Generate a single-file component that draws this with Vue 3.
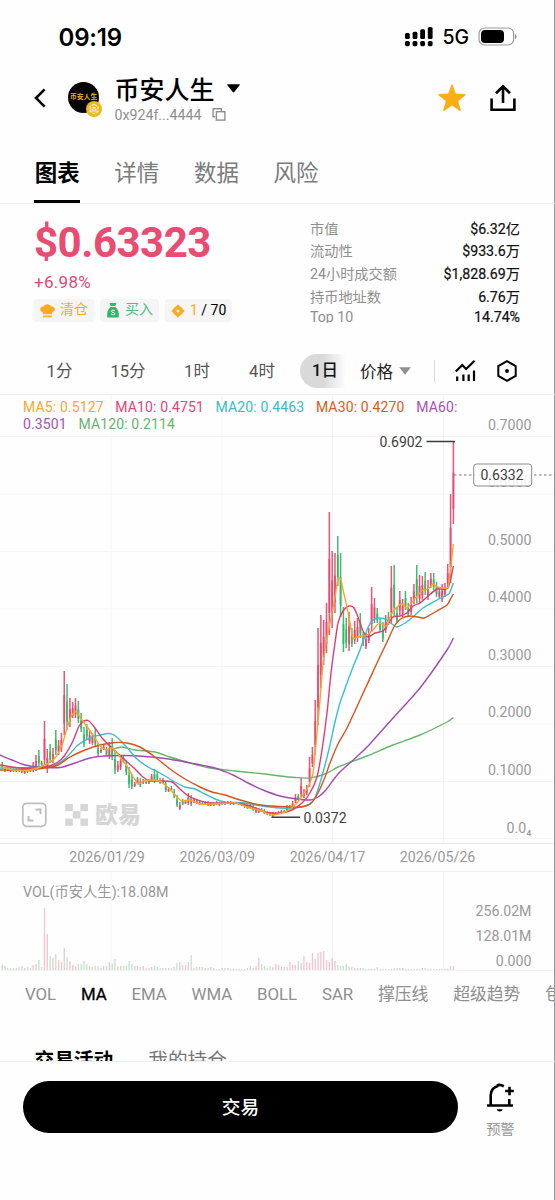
<script setup>
import { computed } from 'vue'

const tabs = ['图表', '详情', '数据', '风险']

const stats = [
  { label: '市值', value: '$6.32亿' },
  { label: '流动性', value: '$933.6万' },
  { label: '24小时成交额', value: '$1,828.69万' },
  { label: '持币地址数', value: '6.76万' },
  { label: 'Top 10', value: '14.74%' },
]

const intervals = ['1分', '15分', '1时', '4时']

const indicators = ['VOL', 'MA', 'EMA', 'WMA', 'BOLL', 'SAR', '撑压线', '超级趋势', '包络线']

const legend = [
  { name: 'MA5', value: '0.5127', color: '#f5a833' },
  { name: 'MA10', value: '0.4751', color: '#e0457b' },
  { name: 'MA20', value: '0.4463', color: '#35bccb' },
  { name: 'MA30', value: '0.4270', color: '#df5a20' },
  { name: 'MA60', value: '0.3501', color: '#a850b8' },
  { name: 'MA120', value: '0.2114', color: '#68b36c' },
]

const gridY = [436.5, 494, 551.5, 609, 666.5, 724, 781.5, 838.5]
const gridX = [111, 222, 332.5, 443.5]
const priceLabels = ['0.7000', '0.6000', '0.5000', '0.4000', '0.3000', '0.2000', '0.1000']
const dates = ['2026/01/29', '2026/03/09', '2026/04/17', '2026/05/26']

// one candle per day: high, low, direction
const raw = `762 769 d,767 772 d,767 771 u,768 772 d,768 772 d,767 772 u,767 772 d,768 773 u,768 774 u,767 773 d,766 772 u,
762 772 u,755 771 u,750 766 d,761 766 d,721 768 u,749 773 u,744 763 d,748 763 u,730 755 d,740 755 u,733 752 u,671 735 u,
684 730 d,698 727 u,702 718 u,698 718 u,701 723 d,713 732 d,727 747 d,724 739 d,730 744 u,733 745 u,728 747 d,743 756 d,
748 753 u,745 750 u,747 756 d,742 759 u,738 760 d,750 774 d,761 772 u,755 770 u,756 763 d,760 775 d,767 788 d,774 789 d,
782 787 u,777 784 u,778 787 d,779 784 u,780 784 d,779 784 u,774 781 u,769 783 d,772 780 d,778 784 d,778 784 u,782 792 d,
787 792 u,786 791 d,789 798 d,795 807 d,802 810 u,799 805 d,800 804 u,793 805 u,795 806 d,798 803 u,799 804 d,800 805 u,
801 805 d,801 804 u,801 806 d,802 806 u,802 806 d,801 805 u,802 806 u,801 805 d,802 805 u,801 804 u,801 805 d,802 805 u,
802 804 d,802 805 u,802 806 u,803 808 d,804 809 d,804 808 u,805 811 d,807 813 u,808 813 u,808 812 d,809 814 d,811 815 d,
812 816 d,812 817 u,812 815 u,811 814 u,810 813 u,810 813 d,805 812 u,805 810 u,801 808 u,794 803 u,794 800 d,778 798 u,
789 798 u,785 795 u,757 787 u,747 767 u,700 755 u,628 725 u,615 688 u,620 665 u,603 653 u,512 635 u,551 628 u,553 613 u,
536 586 d,553 617 d,607 652 d,618 648 d,612 651 u,628 647 d,621 644 u,618 642 u,613 638 d,632 646 d,633 649 u,628 643 u,
587 632 u,598 623 u,608 623 d,618 632 d,622 642 d,615 633 u,612 625 d,566 623 u,565 617 d,607 623 d,591 615 u,599 617 u,
591 610 d,603 617 d,597 615 u,584 604 u,565 603 d,575 604 u,576 600 u,572 595 d,580 600 u,573 588 u,573 590 d,582 597 d,
588 598 u,584 602 u,583 597 u,564 588 u,494 583 u,441 524 u`

const volumes = [
  5, 4, 2, 2, 2, 2, 3, 4, 2, 3, 2, 5, 6, 10, 3, 62, 36, 14, 12, 16, 10, 8, 22, 13, 9, 5, 4, 6, 6, 9,
  6, 4, 3, 4, 4, 2, 4, 4, 8, 7, 11, 4, 4, 4, 4, 9, 6, 4, 4, 3, 4, 2, 2, 3, 4, 3, 2, 2, 2, 2,
  2, 3, 7, 8, 5, 5, 8, 15, 2, 3, 3, 3, 2, 2, 3, 2, 1, 1, 2, 2, 2, 1, 1, 1, 1, 1, 1, 2, 4, 2,
  4, 12, 6, 4, 2, 4, 3, 6, 5, 3, 3, 3, 8, 5, 5, 9, 7, 14, 8, 7, 17, 11, 17, 18, 19, 10, 8, 12, 9, 5,
  4, 4, 6, 3, 3, 2, 2, 2, 2, 1, 1, 1, 1, 3, 1, 1, 1, 1, 1, 2, 2, 2, 2, 1, 1, 1, 1, 1, 1, 2,
  2, 1, 1, 1, 1, 1, 1, 1, 1, 4, 4,
]

const candles = computed(() =>
  raw.split(',').map((row, i) => {
    const [high, low, dir] = row.trim().split(' ')
    const top = Number(high)
    const height = Number(low) - top
    return {
      x: 2.2 + 2.82 * i,
      top,
      height,
      bodyTop: top + height * 0.38,
      bodyHeight: height * 0.44,
      color: dir === 'u' ? '#e5446b' : '#2fb463',
      volume: volumes[i],
    }
  })
)

const maPoints = [
  {
    color: '#66b56a',
    points: '113,749 122,747 135,750 155,752 170,757 190,763 210,768 235,771 265,774 280,776 295,777.5 310,778 325,774 338,767 351,762 367,756 393,745 420,735 447,722 453.4,717.5',
  },
  {
    color: '#a548b5',
    points: '0,755 12,760 25,765 40,767 60,767.5 75,763 90,758 105,756 125,755.5 145,756.5 165,758.5 188,762.5 213,767.5 223,771 233,775 247,782.5 263,790 280,796 297,799 310,800 318,797 325,791 338,774 351,762 367,747 393,718 420,688 447,650 453.4,638',
  },
  {
    color: '#3bbdd0',
    points: '0,768 45,767 57,764 66,758 78,745 92,737 100,735 108,733.5 114,735 122,742 130,751 137,759 148,767 160,773 175,782 185,787 195,789 205,794 215,799 225,802 245,803 262,806 280,808 295,808 310,804 315,798 320,783 325,765 330,745 335,722 340,703 347,683 353,667 360,650 367,630 372,621 378,618 385,619 392,624 397,627 405,623 413,617 423,608 437,600 447,595 449.5,593 453.4,583',
  },
  {
    color: '#dc3f74',
    points: '0,765 20,768 45,767 58,762 65,755 73,741 79,726 84,721 89,721 95,728 103,739 113,749 125,760 135,769 143,777 150,781 158,781 172,782 180,789 187,795 195,799 210,803 235,803 250,806 265,812 280,813 292,810 302,803 310,793 317,777 322,750 327,713 331,673 335,643 338,623 343,611 349,606 354,608 358,617 363,631 368,637 375,633 383,631 388,624 393,617 400,616 407,613 413,606 420,603 427,597 437,589 448,588 453.4,566',
  },
  {
    color: '#d95318',
    points: '0,770 20,770 45,768 58,765 70,757 85,750 100,745 115,742.5 127,743 140,747 155,757 170,769 185,779 200,787 212,792 225,795 240,800 260,805 280,806.5 300,807 310,804 318,793 325,777 330,763 338,744 347,728 360,700 377,663 387,642 395,625 402,618 410,616 418,617 424,618 430,615 437,611 447,605 450,600 453.4,594',
  },
  {
    color: '#f8a52e',
    points: '0,767 14,770 30,770 45,765 55,758 62,745 67,728 72,715 76,712 82,720 88,728 95,738 100,746 106,750 112,748 118,754 122,760 127,766 132,775 138,784 144,781 153,780 160,781 165,785 170,789 175,795 182,801 190,800 200,804 215,804 235,803 250,808 262,811 272,815 285,812 295,805 303,795 308,787 313,773 317,733 320,700 322.7,667 327,637 330,623 335,597 338,579 341,580 343,590 347,607 350,623 353,638 357,637 362,636 367,635 373,630 378,624 382,624 387,626 390,617 395,609 402,604 407,608 413,601 418,595 423,590 428,589 433,584 437,587 447,588 449,582 453.4,544',
  },
]

// Catmull-Rom through the points, softened so steep turns do not overshoot
const smooth = (str) => {
  const p = str.split(' ').map((s) => s.split(',').map(Number))
  let d = `M${p[0][0]} ${p[0][1]}`
  for (let i = 0; i < p.length - 1; i++) {
    const a = p[i - 1] || p[i]
    const b = p[i]
    const c = p[i + 1]
    const e = p[i + 2] || c
    d += `C${b[0] + (c[0] - a[0]) / 8} ${b[1] + (c[1] - a[1]) / 8} ${c[0] - (e[0] - b[0]) / 8} ${c[1] - (e[1] - b[1]) / 8} ${c[0]} ${c[1]}`
  }
  return d
}

const maLines = computed(() => maPoints.map((m) => ({ color: m.color, d: smooth(m.points) })))
</script>

<template>
  <div class="screen">
    <div class="status">
      <span class="time">09:19</span>
      <svg class="signal" width="28" height="20" viewBox="0 0 28 20">
        <rect x="0" y="6" width="4.8" height="6" rx="1.5" />
        <rect x="7.6" y="4.8" width="4.8" height="7.2" rx="1.5" />
        <rect x="15.2" y="2.2" width="4.8" height="9.8" rx="1.5" />
        <rect x="22.8" y="0" width="4.8" height="12" rx="1.5" />
        <rect v-for="n in 4" :key="n" :x="(n - 1) * 7.6" y="14" width="4.8" height="5.2" rx="1.6" />
      </svg>
      <span class="net">5G</span>
      <svg class="battery" width="40" height="20" viewBox="0 0 40 20">
        <rect x="1" y="1" width="34.6" height="17" rx="5.5" fill="none" stroke="#9a9a9a" stroke-width="1.2" />
        <rect x="3" y="3" width="23" height="13" rx="4" />
        <path d="M37 7.3c2 .6 2 4 0 4.6z" fill="#8a8a8a" />
      </svg>
    </div>

    <header class="header">
      <svg class="back" width="12" height="20" viewBox="0 0 12 20">
        <path d="M10.6 1.4L2 10l8.6 8.6" fill="none" stroke="#000" stroke-width="2.6" />
      </svg>
      <div class="avatar">
        <span>币安人生</span>
        <svg class="chain" width="16" height="16" viewBox="0 0 16 16">
          <circle cx="8" cy="8" r="8" fill="#f3b71b" />
          <path d="M8 3.2l3.9 2.3v4.8L8 12.8l-3.900-2.500V5.500z" fill="none" stroke="#fff3cf" stroke-width="1.3" stroke-dasharray="3.2 1" />
          <path d="M5.800 6.700L8 5.400l2.200 1.300L8 8zM7.500 8.600v2.400L5.600 9.800V7.600zM8.500 8.600v2.400l1.900-1.200V7.600z" fill="#fff3cf" />
        </svg>
      </div>
      <div class="token">
        <div class="name">
          <span>币安人生</span>
          <svg width="13" height="9" viewBox="0 0 13 9"><path d="M.8.3h11.4c.6 0 .8.6.4 1L7.3 8c-.4.5-1.1.5-1.5 0L.4 1.300C0 .9.2.3.8.3z" /></svg>
        </div>
        <div class="address">
          <span>0x924f...4444</span>
          <svg width="14" height="13" viewBox="0 0 14 13" fill="none" stroke="#8f8f8f" stroke-width="1.4">
            <path d="M3.4 8.8H1.1V.8h8.300V3" />
            <rect x="4.4" y="3.7" width="8.5" height="8.4" />
          </svg>
        </div>
      </div>
      <svg class="star" width="28" height="28" viewBox="0 0 28 28">
        <path d="M13.200 1.200c.3-.8 1.300-.8 1.600 0l3 8.400 8.900.3c.9 0 1.200 1 .5 1.500l-7 5.500 2.500 8.900c.2.8-.6 1.400-1.300.9L14 21.500l-7.400 5.200c-.7.5-1.500-.1-1.300-.9l2.500-8.900-7-5.500c-.7-.5-.4-1.500.5-1.500l8.900-.3z" fill="#fdae16" />
      </svg>
      <svg class="share" width="26" height="28" viewBox="0 0 26 28" fill="none" stroke="#000" stroke-width="2.6">
        <path d="M1.600 14.500v11.200h22.800V14.500M13 19V2.600M6 9.200l7-6.900 7 6.900" />
      </svg>
    </header>

    <nav class="tabs">
      <span v-for="(tab, i) in tabs" :key="tab" :class="{ active: i === 0 }">{{ tab }}</span>
    </nav>

    <section class="info">
      <div class="left">
        <div class="price">$0.63323</div>
        <div class="change">+6.98%</div>
        <div class="badges">
          <span class="badge yellow">
            <svg width="15" height="14" viewBox="0 0 15 14" fill="#fbab1c">
              <path d="M3 10.300V8.400C1.300 8.200.2 7 .2 5.300c0-2 1.700-3.300 3.600-2.800C4.500 1 5.800.3 7.500.3s3 .7 3.700 2.200c1.900-.5 3.600.8 3.600 2.800 0 1.700-1.100 2.900-2.800 3.100v1.900z" />
              <rect x="3" y="11.6" width="9" height="1.7" />
            </svg>
            <em>清仓</em>
          </span>
          <span class="badge green">
            <svg width="12" height="15" viewBox="0 0 12 15" fill="#2eb867">
              <path d="M2.500 0h7L8.300 3H3.700zM3.500 4h5c2 1.700 3.300 4.300 3.300 7.200V14.600H.2V11.200C.2 8.300 1.500 5.700 3.500 4z" />
              <path d="M7.800 7.800c-1-.8-3.400-.8-3.400.5 0 1.500 3.400.7 3.400 2.300 0 1.400-2.600 1.400-3.700.4" fill="none" stroke="#fff" stroke-width="1" />
            </svg>
            <em>买入</em>
          </span>
          <span class="badge rank">
            <svg width="14" height="14" viewBox="0 0 14 14">
              <path d="M7 .2l1.700 2.100c1.300.4 2.500 1.600 3 3L13.800 7l-2.100 1.700c-.5 1.400-1.700 2.600-3 3L7 13.800l-1.700-2.100c-1.300-.4-2.500-1.600-3-3L.2 7l2.100-1.700c.5-1.400 1.700-2.600 3-3z" fill="#fbab1c" />
              <circle cx="7" cy="7" r="1.5" fill="#fff" />
            </svg>
            <em><i>1</i> / 70</em>
          </span>
        </div>
      </div>
      <div class="stats">
        <div v-for="s in stats" :key="s.label" class="stat">
          <span>{{ s.label }}</span>
          <b>{{ s.value }}</b>
        </div>
      </div>
    </section>

    <div class="intervals">
      <span v-for="item in intervals" :key="item" class="interval">{{ item }}</span>
      <span class="selected">1日</span>
      <span class="mode">
        价格
        <svg width="12" height="8" viewBox="0 0 12 8"><path d="M.2.3h11.600L6 7.700z" fill="#8f8f8f" /></svg>
      </span>
      <span class="sep"></span>
      <svg class="tool" width="21" height="21" viewBox="0 0 21 21" fill="none" stroke="#000" stroke-width="2.2">
        <path d="M.8 11.500L7.300 5l3.800 4L19.600.8M2.200 16.500V21M8.400 14.500V21M13.700 14.500V21M19 10.500V21" />
      </svg>
      <svg class="hex" width="20" height="22" viewBox="0 0 20 22" fill="none" stroke="#000" stroke-width="2">
        <path d="M10 1.200l8.700 4.900v9.800L10 20.800 1.300 15.900V6.100z" />
        <circle cx="10" cy="11" r="1.9" fill="#000" stroke="none" />
      </svg>
    </div>

    <div class="chart">
      <svg width="555" height="577" viewBox="0 395 555 577">
        <g stroke="#f4f4f4">
          <path v-for="y in gridY" :key="y" :d="`M0 ${y}H554`" />
          <path v-for="x in gridX" :key="x" :d="`M${x} 395V843M${x} 872V970`" />
        </g>
        <path d="M0 843.500H554" stroke="#e6e6e6" />
        <path d="M0 871.500H554M0 970.500H554" stroke="#f1f1f1" />

        <!-- watermark -->
        <g fill="none" stroke="#bdbdbd" stroke-width="1.7">
          <rect x="22.8" y="803.3" width="23" height="23" rx="4" />
          <path d="M35.500 809.500h5v4.500M28.500 816v4.500h5" stroke-width="2" />
        </g>
        <g fill="#d6d6d6">
          <rect x="65.2" y="804" width="7.6" height="7.2" />
          <rect x="80.4" y="804" width="7.6" height="7.2" />
          <rect x="72.8" y="811.2" width="7.6" height="7.4" />
          <rect x="65.2" y="818.6" width="7.6" height="7.2" />
          <rect x="80.4" y="818.6" width="7.6" height="7.2" />
          <text x="95" y="823" class="brand">欧易</text>
        </g>

        <g v-for="(c, i) in candles" :key="i" :fill="c.color">
          <rect :x="c.x - 0.75" :y="c.top" width="1.5" :height="c.height" fill-opacity="0.9" />
          <rect :x="c.x - 1" :y="c.bodyTop" width="2" :height="c.bodyHeight" fill-opacity="0.75" />
          <rect :x="c.x - 0.65" :y="970 - c.volume" width="1.3" :height="c.volume" fill-opacity="0.32" />
        </g>
        <path v-for="m in maLines" :key="m.color" :d="m.d" :stroke="m.color" fill="none" stroke-width="1.4" />

        <g class="axis">
          <text v-for="(p, i) in priceLabels" :key="p" x="531.5" :y="429.7 + i * 57.5" text-anchor="end">{{ p }}</text>
          <text x="531.5" y="832.5" text-anchor="end">0.0<tspan>₄</tspan></text>
          <text v-for="(d, i) in dates" :key="d" :x="107 + i * 110.2" y="861.5" text-anchor="middle">{{ d }}</text>
          <text x="531.5" y="916" text-anchor="end">256.02M</text>
          <text x="531.5" y="941" text-anchor="end">128.01M</text>
          <text x="531.5" y="966" text-anchor="end">0.000</text>
          <text x="23" y="897" class="vol">VOL(币安人生):18.08M</text>
        </g>

        <path d="M426.500 441.500H455M271.500 817.200H300" stroke="#3c3c3c" stroke-width="1.5" />
        <path d="M454 475H555" stroke="#777" stroke-dasharray="2.5 2.5" />
        <rect x="473.7" y="464" width="58" height="22" rx="3" fill="#fff" fill-opacity="0.85" stroke="#8a8a8a" />
        <g class="mark">
          <text x="422.5" y="447" text-anchor="end">0.6902</text>
          <text x="303.5" y="822.5">0.0372</text>
          <text x="480.5" y="480">0.6332</text>
        </g>
      </svg>
      <div class="legend">
        <template v-for="l in legend" :key="l.name">
          <span :style="{ color: l.color }">{{ l.name }}:</span>{{ ' ' }}
          <span class="value" :style="{ color: l.color }">{{ l.value }}</span>{{ ' ' }}
        </template>
      </div>
    </div>

    <div class="indicators">
      <span v-for="item in indicators" :key="item" :class="{ active: item === 'MA' }">{{ item }}</span>
    </div>

    <div class="activity">
      <b>交易活动</b>
      <span>我的持仓</span>
    </div>

    <footer class="bottom">
      <button class="trade">交易</button>
      <div class="alert">
        <svg width="27" height="30" viewBox="0 0 27 30" fill="none" stroke="#000" stroke-width="2.6">
          <path d="M0 22.500h26M3.700 22V12c0-4.500 3-8.300 7.500-9M22.300 16v6M10 2.600c2-1.200 4.300-.9 6.800.8M22.500 3.700v8.600M18.200 8h8.600" />
          <path d="M9.800 26.300h5.800c-.5 3-5.300 3-5.800 0z" fill="#000" stroke="none" />
        </svg>
        <span>预警</span>
      </div>
    </footer>
  </div>
</template>

<style>
body {
  background: #fff;
}
</style>

<style scoped>
.screen {
  box-sizing: border-box;
  width: 555px;
  height: 1200px;
  display: flex;
  flex-direction: column;
  overflow: hidden;
  background: #fefefe;
  box-shadow: inset -1px 0 #999;
  font-family: Roboto, 'Noto Sans CJK SC', sans-serif;
  color: #000;
}

svg {
  display: block;
  flex: none;
}

.status {
  display: flex;
  align-items: center;
  height: 74px;
  padding-left: 58.5px;
  font-family: Inter, sans-serif;
}

.time {
  width: 346.5px;
  font-size: 24px;
  font-weight: 600;
  letter-spacing: -0.2px;
}

.signal {
  margin-top: -1px;
}

.net {
  width: 35px;
  margin-left: 9.5px;
  font-size: 19.5px;
  font-weight: 500;
}

.header {
  display: flex;
  height: 74px;
  padding-left: 34px;
}

.back {
  margin-top: 14px;
}

.avatar {
  position: relative;
  width: 31px;
  height: 31px;
  margin: 8px 0 0 22px;
  border-radius: 50%;
  background: #060400;
  color: #e8b01c;
  font-size: 6.8px;
  font-weight: 700;
  line-height: 31px;
}

.avatar > span {
  display: block;
  margin-left: 2px;
  white-space: nowrap;
}

.chain {
  position: absolute;
  right: -3px;
  bottom: -4px;
}

.token {
  width: 323px;
  margin-left: 15.5px;
}

.name {
  display: flex;
  align-items: center;
  gap: 12px;
  height: 30px;
  margin-top: -1px;
  font-size: 25px;
  font-weight: 500;
}

.address {
  display: flex;
  align-items: center;
  gap: 11px;
  height: 23px;
  color: #8f8f8f;
  font-size: 14.2px;
}

.star {
  margin-top: 10px;
}

.share {
  margin: 10px 0 0 24px;
}

.tabs {
  display: flex;
  gap: 33.6px;
  height: 55px;
  padding-left: 34px;
  border-bottom: 1px solid #f0f0f0;
  color: #7b7b7b;
  font-size: 22.5px;
  line-height: 50px;
}

.tabs span {
  box-sizing: border-box;
  width: 46px;
  height: 55px;
  padding-left: 0.7px;
}

.tabs .active {
  border-bottom: 3px solid #000;
  color: #000;
  font-weight: 700;
}

.info {
  display: flex;
  justify-content: space-between;
  height: 141px;
  padding: 0 35px 0 34px;
}

.price {
  height: 54px;
  margin-top: 12px;
  color: #ea4b70;
  font-size: 42px;
  font-weight: 700;
  letter-spacing: -0.5px;
  line-height: 54px;
}

.change {
  height: 25px;
  color: #e04a72;
  font-size: 17px;
  letter-spacing: 0.3px;
  line-height: 25px;
}

.badges {
  display: flex;
  gap: 6px;
  margin-top: 4px;
}

.badge {
  display: flex;
  align-items: center;
  gap: 5px;
  height: 23px;
  padding: 0 6px;
  border-radius: 3px;
  background: #f5f5f5;
  font-size: 14px;
  line-height: 21px;
  white-space: nowrap;
}

.badge em {
  height: 23px;
  font-style: normal;
}

.badge i {
  color: #fbab1c;
  font-style: normal;
}

.yellow {
  color: #f2a93c;
}

.green {
  color: #4fbc7c;
}

.green svg {
  margin: 0 1px;
}

.rank {
  line-height: 23px;
}

.stats {
  width: 210px;
  height: 105.5px;
  margin-top: 13.5px;
  overflow: hidden;
}

.stat {
  display: flex;
  justify-content: space-between;
  height: 22.7px;
  font-size: 14.2px;
  line-height: 22.7px;
  color: #8f8f8f;
}

.stat:last-child {
  line-height: 18px;
}

.stat b {
  color: #111;
  font-weight: 400;
  -webkit-text-stroke: 0.2px #111;
}

.intervals {
  display: grid;
  grid-template-columns: 69px 68px 70px 60px 67px 65px 20px 43px 20px;
  align-items: center;
  height: 47px;
  padding: 2px 0 0 25px;
  border-bottom: 1px solid #efefef;
  color: #555;
  font-size: 16.5px;
}

.interval {
  padding-bottom: 2px;
  text-align: center;
}

.selected {
  width: 34px;
  height: 34px;
  margin-left: 8px;
  padding-left: 12px;
  border-radius: 17px 0 0 17px;
  background: linear-gradient(90deg, #d9d9d9 50%, #fefefe 100%);
  color: #111;
  font-weight: 500;
  line-height: 34px;
}

.mode {
  display: flex;
  align-items: center;
  gap: 6px;
  margin-left: 1px;
  color: #222;
}

.sep {
  width: 1px;
  height: 22px;
  margin-left: 10px;
  background: #dadada;
}

.tool {
  margin-left: 11px;
}

.hex {
  margin-left: 10px;
}

.chart {
  position: relative;
  height: 577px;
}

.chart text {
  font-size: 14px;
}

.axis {
  fill: #999;
}

.axis text {
  font-size: 14.2px;
}

.axis .vol {
  font-size: 14.3px;
}

.mark {
  fill: #3f3f3f;
}

.chart .brand {
  font-size: 23px;
  font-weight: 900;
}

.legend {
  position: absolute;
  top: 4px;
  left: 23px;
  width: 450px;
  font-size: 14px;
  letter-spacing: 0.13px;
  line-height: 17px;
}

.value {
  margin-right: 8px;
}

.indicators {
  display: flex;
  gap: 24.8px;
  height: 46px;
  margin-right: 1px;
  padding-left: 25px;
  color: #8f8f8f;
  font-size: 16.8px;
  line-height: 45px;
  white-space: nowrap;
  overflow: hidden;
}

.indicators .active {
  color: #000;
  -webkit-text-stroke: 0.3px #000;
}

.activity {
  display: flex;
  gap: 35px;
  height: 17px;
  padding: 26px 0 0 34.5px;
  overflow: hidden;
  font-size: 19.7px;
  line-height: 33px;
  color: #777;
}

.activity b {
  color: #000;
}

.bottom {
  display: flex;
  align-items: flex-start;
  padding: 19px 0 0 23px;
  border-top: 1px solid #f0f0f0;
}

.trade {
  width: 435px;
  height: 52px;
  padding-bottom: 4px;
  border: 0;
  border-radius: 26px;
  background: #000;
  color: #fff;
  font: 500 18.7px 'Noto Sans CJK SC', sans-serif;
}

.alert {
  display: flex;
  flex-direction: column;
  align-items: center;
  width: 30px;
  margin: 2px 0 0 27.5px;
  color: #969696;
  font-size: 14px;
  line-height: 32px;
}
</style>
